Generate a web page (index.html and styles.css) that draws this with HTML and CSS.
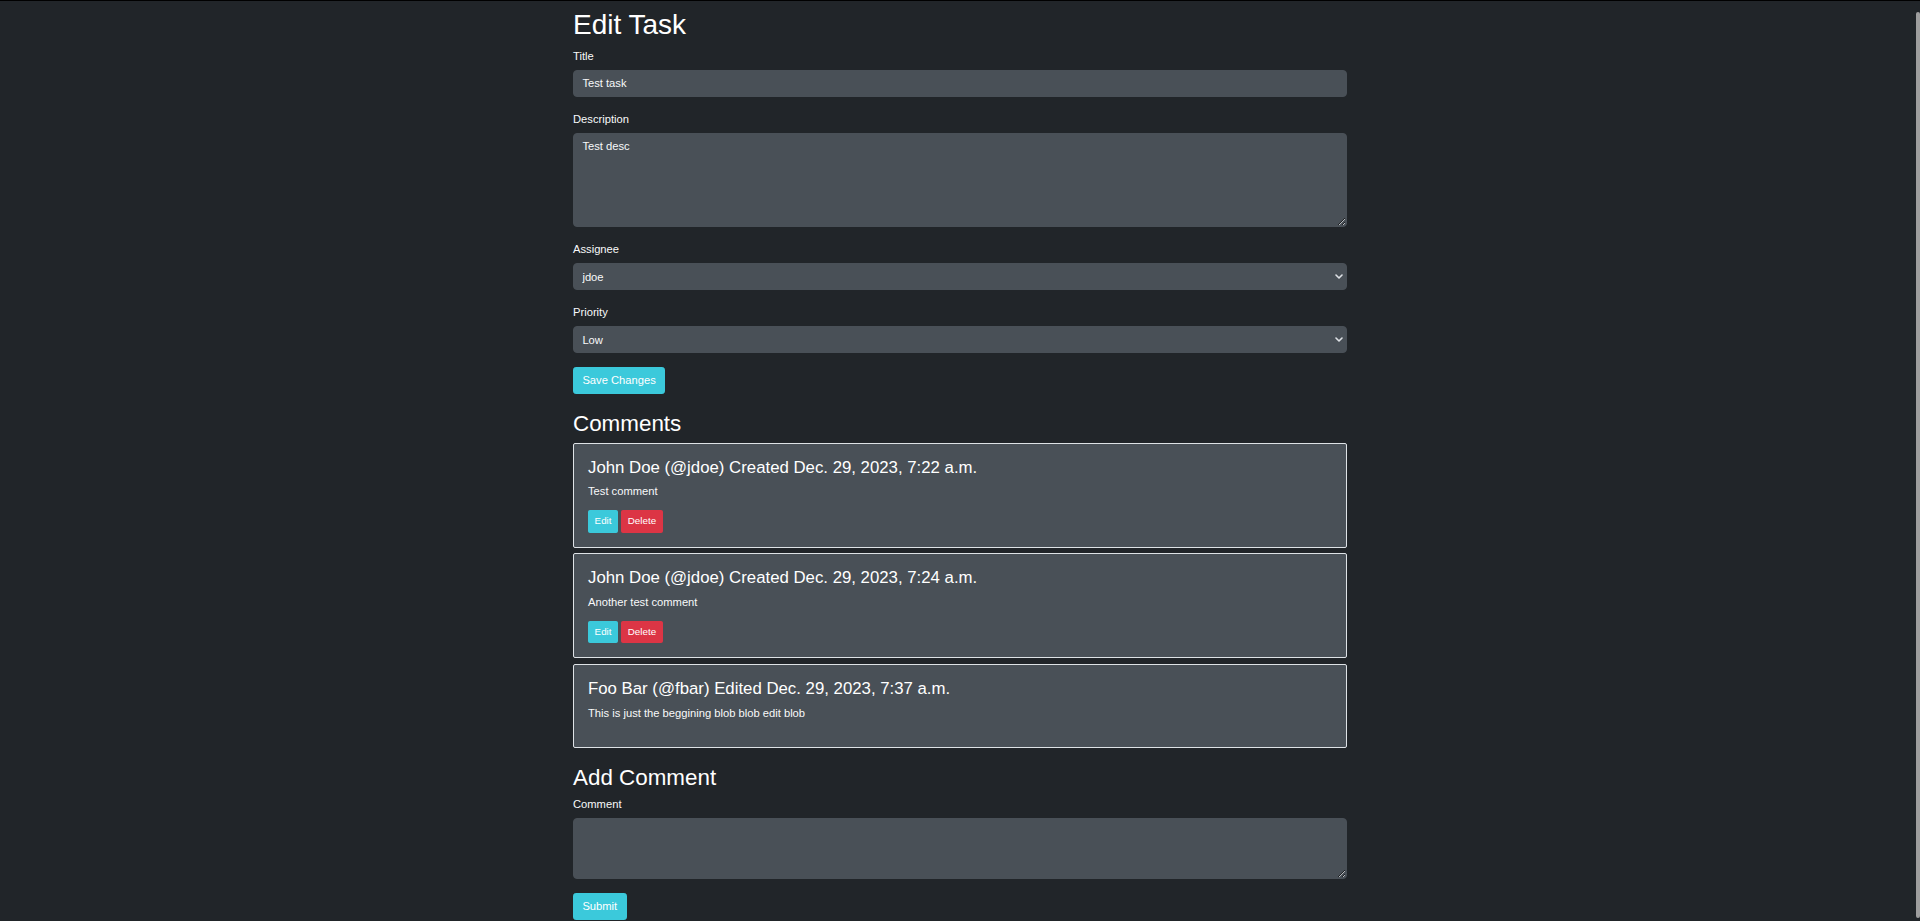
FILE: index.html
```html
<!DOCTYPE html>
<html lang="en">
<head>
<meta charset="utf-8">
<title>Edit Task</title>
<link rel="stylesheet" href="styles.css">
</head>
<body>
<div class="container">
  <h1 class="page-title">Edit Task</h1>
  <form class="task-form">
    <div class="form-group">
      <label class="form-label">Title</label>
      <input class="form-control" type="text" value="Test task">
    </div>
    <div class="form-group">
      <label class="form-label">Description</label>
      <textarea class="form-control textarea-desc" rows="5">Test desc</textarea>
    </div>
    <div class="form-group">
      <label class="form-label">Assignee</label>
      <div class="select-wrap">
        <select class="form-control form-select"><option>jdoe</option></select>
        <svg class="chevron" viewBox="0 0 8 5" width="8" height="5"><path d="M1 1 L4 4 L7 1" fill="none" stroke="#dee2e6" stroke-width="1.6" stroke-linecap="round" stroke-linejoin="round"/></svg>
      </div>
    </div>
    <div class="form-group">
      <label class="form-label">Priority</label>
      <div class="select-wrap">
        <select class="form-control form-select"><option>Low</option></select>
        <svg class="chevron" viewBox="0 0 8 5" width="8" height="5"><path d="M1 1 L4 4 L7 1" fill="none" stroke="#dee2e6" stroke-width="1.6" stroke-linecap="round" stroke-linejoin="round"/></svg>
      </div>
    </div>
    <button type="button" class="btn btn-info">Save Changes</button>
  </form>

  <h2 class="section-title">Comments</h2>
  <div class="comment-list">
    <div class="card">
      <div class="card-body">
        <h4 class="card-title">John Doe (@jdoe) Created Dec. 29, 2023, 7:22 a.m.</h4>
        <p class="card-text">Test comment</p>
        <div class="card-actions"><button type="button" class="btn btn-sm btn-info">Edit</button> <button type="button" class="btn btn-sm btn-danger">Delete</button></div>
      </div>
    </div>
    <div class="card">
      <div class="card-body">
        <h4 class="card-title">John Doe (@jdoe) Created Dec. 29, 2023, 7:24 a.m.</h4>
        <p class="card-text">Another test comment</p>
        <div class="card-actions"><button type="button" class="btn btn-sm btn-info">Edit</button> <button type="button" class="btn btn-sm btn-danger">Delete</button></div>
      </div>
    </div>
    <div class="card">
      <div class="card-body">
        <h4 class="card-title">Foo Bar (@fbar) Edited Dec. 29, 2023, 7:37 a.m.</h4>
        <p class="card-text">This is just the beggining blob blob edit blob</p>
      </div>
    </div>
  </div>

  <h2 class="section-title add-title">Add Comment</h2>
  <form class="comment-form">
    <div class="form-group">
      <label class="form-label">Comment</label>
      <textarea class="form-control textarea-comment" rows="3"></textarea>
    </div>
    <button type="button" class="btn btn-info">Submit</button>
  </form>
</div>
<div class="scrollbar-thumb"></div>
</body>
</html>
```

FILE: styles.css
```css
html, body {
  margin: 0;
  padding: 0;
}
body {
  background: #212529;
  color: #fff;
  font-family: "Liberation Sans", Arial, sans-serif;
  font-size: 11.2px;
  line-height: 1.5;
  border-top: 1px solid #000;
}
.container {
  width: 774px;
  margin: 0 auto;
  padding-top: 7px;
}
.page-title {
  font-size: 28px;
  font-weight: 400;
  line-height: 1.2;
  margin: 0 0 6px;
}
.section-title {
  font-size: 22.4px;
  font-weight: 400;
  line-height: 1.2;
  margin: 17px 0 4.6px;
}
.add-title {
  margin-top: 16.2px;
  margin-bottom: 4.6px;
}
.task-form, .comment-form {
  margin: 0;
}
.form-group {
  margin-bottom: 14px;
}
.form-label {
  display: block;
  margin-bottom: 5.6px;
  color: #f8f9fa;
}
.form-control {
  display: block;
  box-sizing: border-box;
  width: 100%;
  margin: 0;
  font-family: inherit;
  font-size: 11.2px;
  line-height: 16.8px;
  padding: 4.2px 8.4px;
  height: 26.6px;
  color: #f8f9fa;
  background: #495057;
  border: 1px solid #495057;
  border-radius: 4px;
  outline: none;
}
textarea.form-control {
  resize: vertical;
}
.textarea-desc {
  height: 94px;
}
.textarea-comment {
  height: 60.8px;
}
.select-wrap {
  position: relative;
}
.form-select {
  appearance: none;
  -webkit-appearance: none;
  padding-right: 24px;
}
.chevron {
  position: absolute;
  right: 4.5px;
  top: 50%;
  margin-top: -2.5px;
  pointer-events: none;
}
.btn {
  display: inline-block;
  box-sizing: border-box;
  font-family: inherit;
  font-size: 11.2px;
  line-height: 16.8px;
  padding: 4.2px 8.4px;
  border: 1px solid transparent;
  border-radius: 2.8px;
  color: #fff;
  cursor: pointer;
  vertical-align: middle;
}
.btn-info {
  background: #3bc9db;
  border-color: #3bc9db;
}
.btn-danger {
  background: #dc3545;
  border-color: #dc3545;
}
.btn-sm {
  font-size: 9.8px;
  line-height: 14.7px;
  padding: 2.8px 5.6px;
  border-radius: 1.6px;
}
.card {
  background: #495057;
  border: 1px solid #dee2e6;
  border-radius: 2px;
  margin-bottom: 5.6px;
}
.card-body {
  padding: 14px;
}
.card-title {
  font-size: 16.8px;
  font-weight: 400;
  line-height: 1.2;
  margin: 0 0 5.6px;
}
.card-text {
  margin: 0 0 10.2px;
  color: #f8f9fa;
}
.card:last-child .card-text {
  margin-bottom: 12px;
}
.card-actions {
  line-height: 0;
  font-size: 11.2px;
}
.card-actions .btn {
  vertical-align: top;
}
.scrollbar-thumb {
  position: fixed;
  right: 0;
  top: 12px;
  width: 4px;
  height: 906px;
  background: #9e9e9e;
  border-radius: 2px;
}
```
